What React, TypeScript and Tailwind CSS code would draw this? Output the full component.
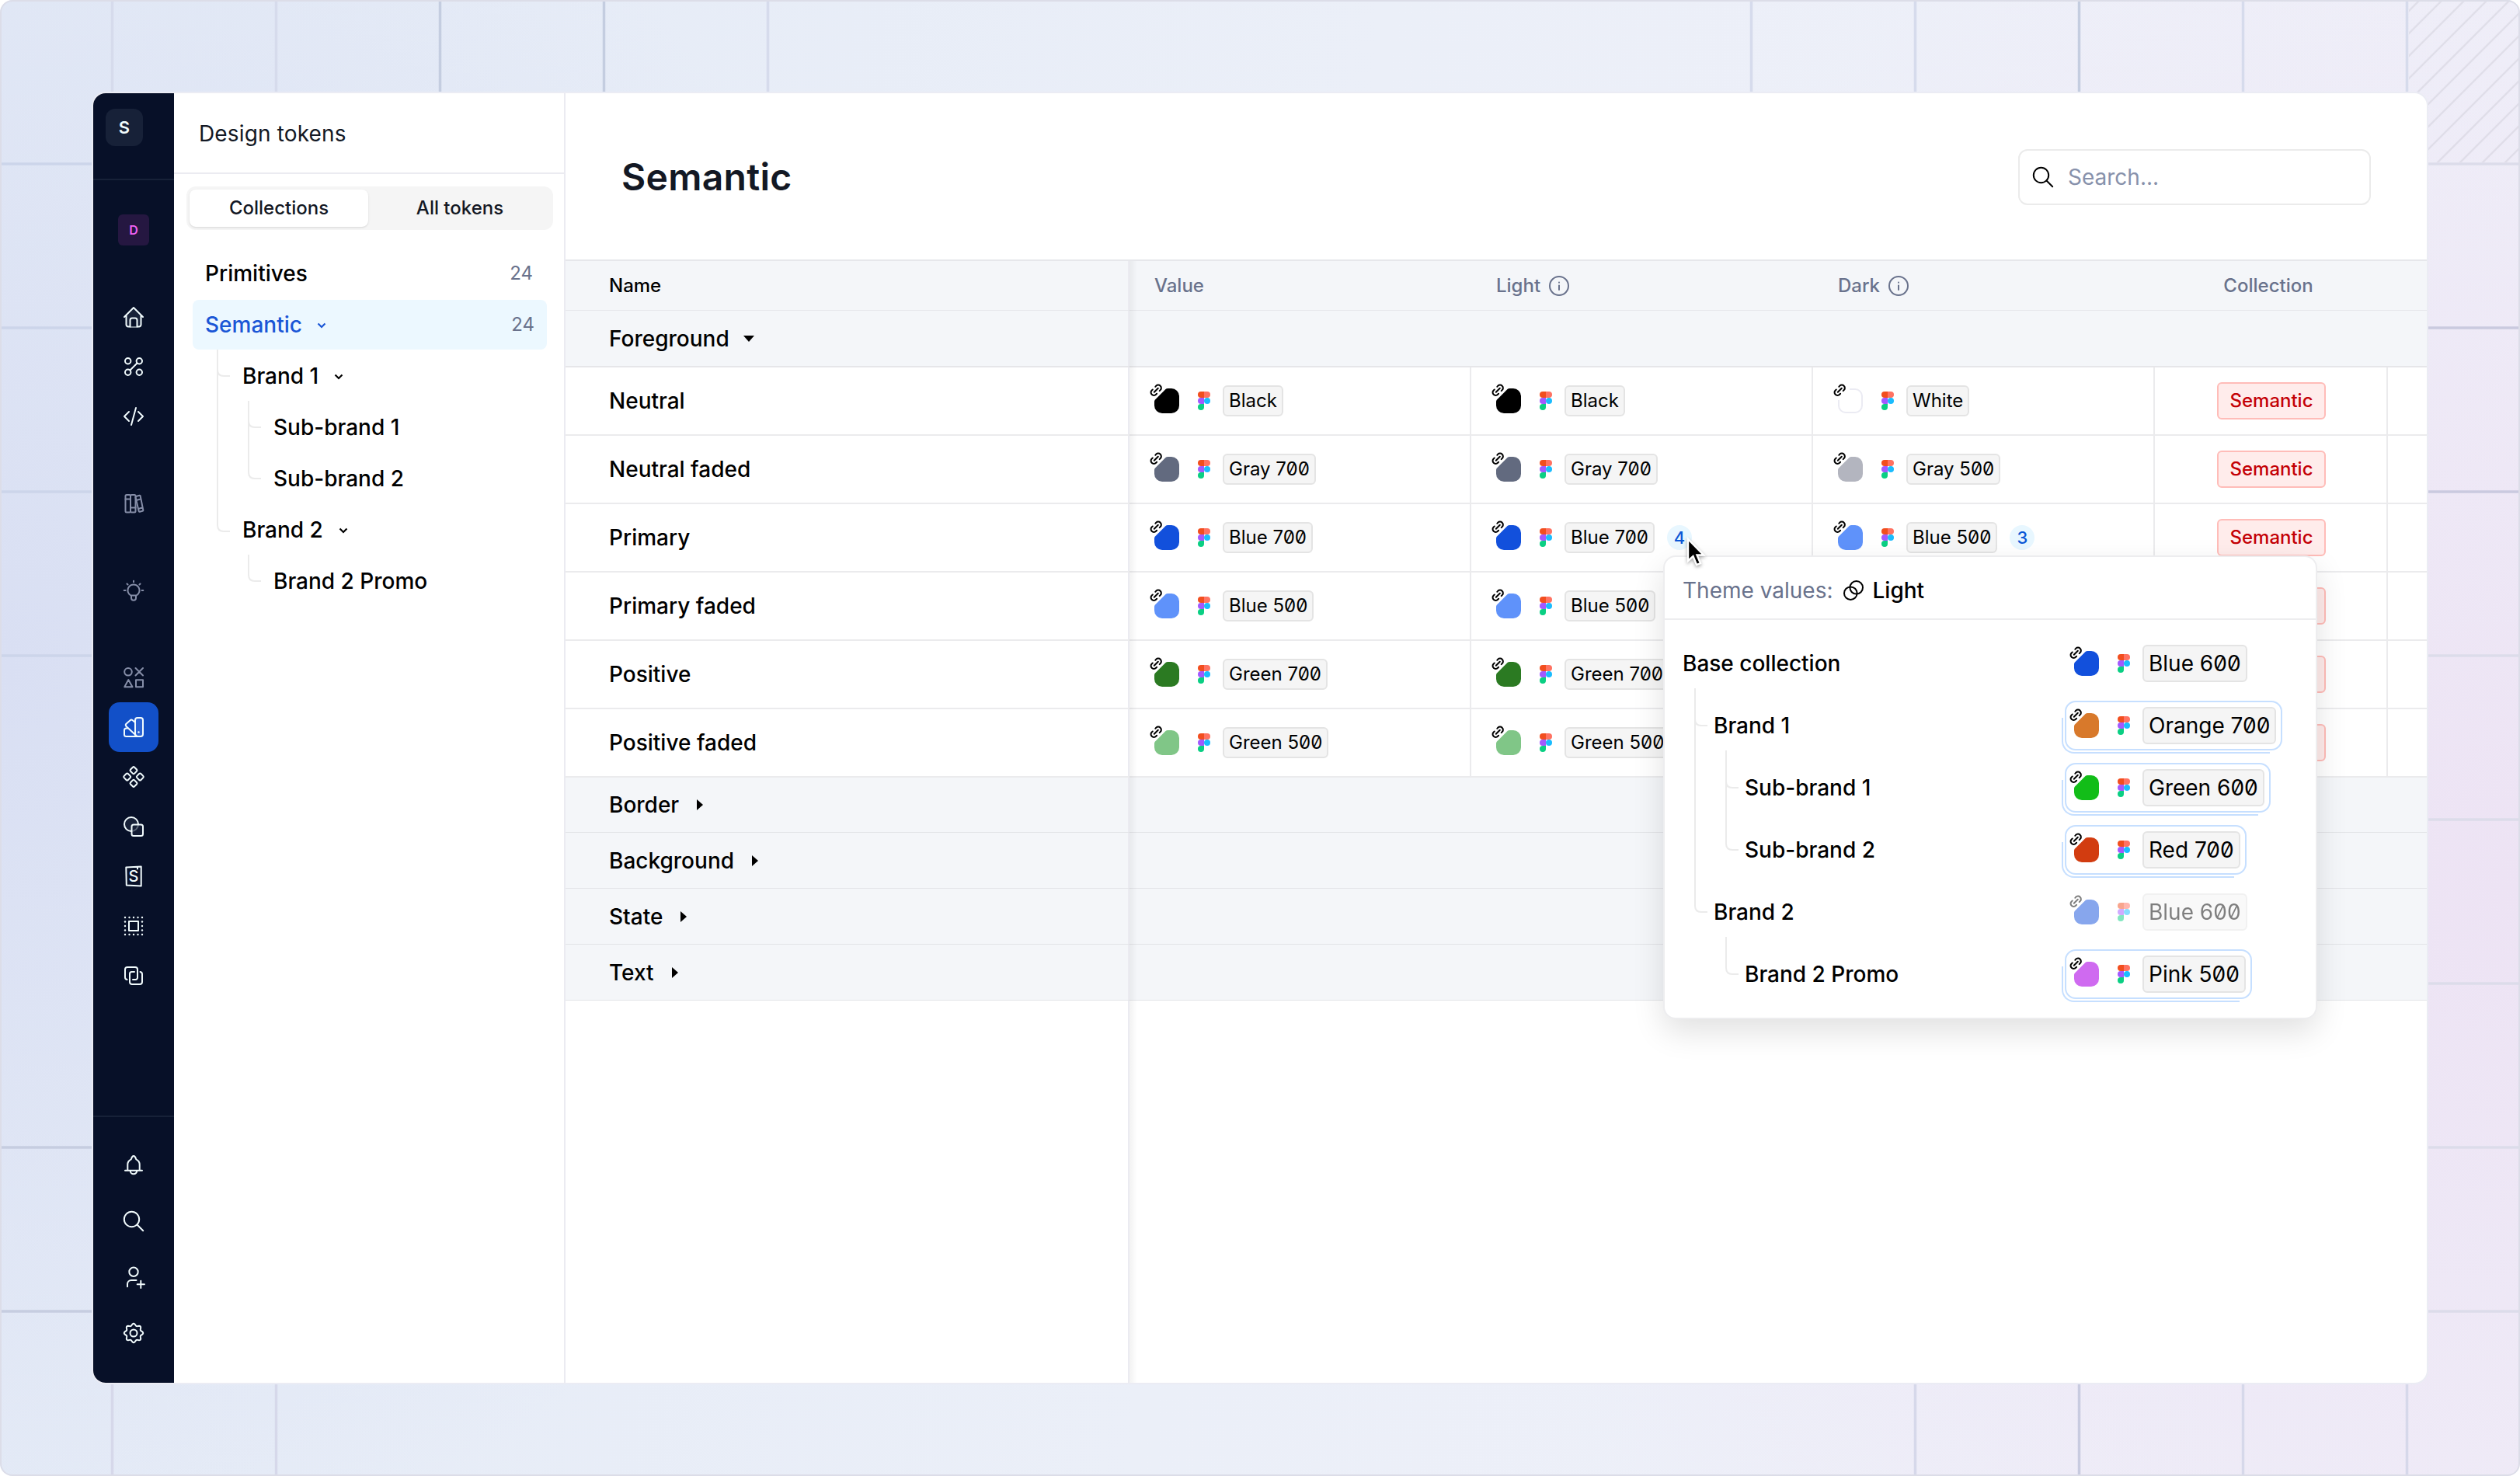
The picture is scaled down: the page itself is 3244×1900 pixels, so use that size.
import type { ReactNode } from 'react'
import clsx from 'clsx'

type Item = { name: string; color: string; count?: number }

const rows: { name: string; value: Item; light: Item; dark?: Item }[] = [
  {
    name: 'Neutral',
    value: { name: 'Black', color: '#000000' },
    light: { name: 'Black', color: '#000000' },
    dark: { name: 'White', color: '#ffffff' },
  },
  {
    name: 'Neutral faded',
    value: { name: 'Gray 700', color: '#626a7f' },
    light: { name: 'Gray 700', color: '#626a7f' },
    dark: { name: 'Gray 500', color: '#b3b5bf' },
  },
  {
    name: 'Primary',
    value: { name: 'Blue 700', color: '#1250dc' },
    light: { name: 'Blue 700', color: '#1250dc', count: 4 },
    dark: { name: 'Blue 500', color: '#5f92fa', count: 3 },
  },
  {
    name: 'Primary faded',
    value: { name: 'Blue 500', color: '#5f92fa' },
    light: { name: 'Blue 500', color: '#5f92fa' },
  },
  {
    name: 'Positive',
    value: { name: 'Green 700', color: '#2b7a22' },
    light: { name: 'Green 700', color: '#2b7a22' },
  },
  {
    name: 'Positive faded',
    value: { name: 'Green 500', color: '#80c687' },
    light: { name: 'Green 500', color: '#80c687' },
  },
]

const groups = ['Border', 'Background', 'State', 'Text']

const themeValues = [
  { label: 'Base collection', indent: 'pl-[23px]', name: 'Blue 600', color: '#1250dc', kind: 'base' },
  { label: 'Brand 1', indent: 'pl-[63px]', name: 'Orange 700', color: '#d8792b', kind: 'override' },
  { label: 'Sub-brand 1', indent: 'pl-[103px]', name: 'Green 600', color: '#12bd18', kind: 'override' },
  { label: 'Sub-brand 2', indent: 'pl-[103px]', name: 'Red 700', color: '#d23c10', kind: 'override' },
  { label: 'Brand 2', indent: 'pl-[63px]', name: 'Blue 600', color: '#1250dc', kind: 'inherited' },
  { label: 'Brand 2 Promo', indent: 'pl-[103px]', name: 'Pink 500', color: '#cf6af0', kind: 'override' },
]

// eight-lobed outline of the settings cog
const gearPath =
  Array.from({ length: 97 }, (_, i) => {
    const a = (i / 96) * Math.PI * 2
    const r = 10.9 + 1.3 * Math.cos(8 * a)
    return `${i ? 'L' : 'M'}${(16 + r * Math.cos(a)).toFixed(2)} ${(16 + r * Math.sin(a)).toFixed(2)}`
  }).join('') + 'Z'

const dots = [5, 10.5, 16, 21.5, 27]

function Icon({ children, className }: { children: ReactNode; className?: string }) {
  return (
    <svg
      viewBox="0 0 32 32"
      fill="none"
      stroke="currentColor"
      strokeWidth="2"
      strokeLinecap="round"
      strokeLinejoin="round"
      className={clsx('size-8 shrink-0', className)}
    >
      {children}
    </svg>
  )
}

function NavItem({ children, className }: { children: ReactNode; className?: string }) {
  return (
    <div className={clsx('flex size-16 shrink-0 items-center justify-center rounded-[14px]', className)}>
      <Icon>{children}</Icon>
    </div>
  )
}

function Rail() {
  return (
    <nav className="flex w-[104px] shrink-0 flex-col bg-[#071028] text-[#f1fbfd]">
      <div className="h-28 border-b-2 border-[#172138] pt-5 pl-4">
        <div className="flex size-12 items-center justify-center rounded-xl bg-[#172138] text-[22px] font-semibold">
          S
        </div>
      </div>
      <div className="flex flex-col items-center pt-11">
        <div className="flex size-10 items-center justify-center rounded-md bg-[#251741] text-base font-semibold text-[#f263f5]">
          D
        </div>
        <NavItem className="mt-[60px]">
          <path d="M6.5 13.5V26a2.5 2.5 0 0 0 2.500 2.500h14a2.500 2.500 0 0 0 2.500-2.500V13.500L16 4Z" fill="#172138" stroke="none" />
          <path d="M4 16 16 4l12 12M6.500 14v12a2.500 2.500 0 0 0 2.500 2.500h14a2.500 2.500 0 0 0 2.500-2.500V14" />
          <path d="M11.500 28.500V20a2.500 2.500 0 0 1 2.500-2.500h4a2.500 2.500 0 0 1 2.500 2.500v8.500" fill="#071028" />
        </NavItem>
        <NavItem>
          <circle cx="8.700" cy="8.700" r="3.700" />
          <circle cx="23.300" cy="8.700" r="3.700" />
          <circle cx="8.700" cy="23.300" r="3.700" />
          <circle cx="23.300" cy="23.300" r="3.700" />
          <path d="m11.500 20.500 9-9" />
        </NavItem>
        <NavItem>
          <path d="m10 10-6 6 6 6M22 10l6 6-6 6M19 5l-6 22" />
        </NavItem>
        <NavItem className="mt-12 text-[#868ea8]">
          <rect x="5.500" y="5" width="6.500" height="22.500" rx="1.500" />
          <rect x="12" y="5" width="6.500" height="22.500" rx="1.500" />
          <path d="M5.500 10.500H12M12 21.500h6.500" />
          <path d="m19 7 4.500-1.200a1 1 0 0 1 1.200.8l3.600 18a1 1 0 0 1-.8 1.200l-3.600.9a1 1 0 0 1-1.200-.8L18.500 8M19.500 12l5.600-1.600M22 23l5.500-1.600" />
        </NavItem>
        <NavItem className="mt-12 text-[#868ea8]">
          <path d="M13 22.500v3.300a3 3 0 0 0 6 0v-3.300M12.500 22.600a7.500 7.500 0 1 1 7 0zM16 3.700v1.600M3.700 16h1.800M26.500 16h1.800M7.500 7.500l1 1M24.500 7.500l-1 1" />
        </NavItem>
        <NavItem className="mt-12 text-[#868ea8]">
          <circle cx="9" cy="8.800" r="4.800" />
          <path d="m18.500 4 9.500 9.500M28 4l-9.500 9.500M9.300 19l-5 9.300h10.200zM19 19.200h9v9h-9z" />
        </NavItem>
        <NavItem className="bg-[#1250c8]">
          <rect x="18" y="4" width="10" height="24" rx="3" fill="#2a63d4" />
          <path d="m18 10-3.200-2.700a2.500 2.500 0 0 0-3.500.2L6.500 11.800c-1 1-1 2 0 3.200L20 27.500" />
          <path d="M8 17.500H6.500A2.500 2.500 0 0 0 4 20v5.500A2.500 2.500 0 0 0 6.500 28H23" />
          <circle cx="22.500" cy="22.500" r="1.200" fill="currentColor" stroke="none" />
        </NavItem>
        <NavItem>
          <rect x="12.400" y="4.100" width="7.200" height="7.200" rx="1.600" transform="rotate(45 16 7.700)" />
          <rect x="4.100" y="12.400" width="7.200" height="7.200" rx="1.600" transform="rotate(45 7.700 16)" />
          <rect x="20.700" y="12.400" width="7.200" height="7.200" rx="1.600" transform="rotate(45 24.300 16)" />
          <rect x="12.400" y="20.700" width="7.200" height="7.200" rx="1.600" transform="rotate(45 16 24.300)" />
        </NavItem>
        <NavItem>
          <circle cx="13" cy="13" r="9" fill="#172138" />
          <rect x="13.500" y="13.500" width="14.500" height="14.500" rx="2.500" fill="#172138" fillOpacity="0.700" />
        </NavItem>
        <NavItem>
          <path d="m6.300 4.500 19.400-1v25L6.800 27.600zM21 4.500v2" />
          <text
            x="16"
            y="23"
            textAnchor="middle"
            fontSize="20"
            fontWeight="500"
            fill="currentColor"
            stroke="none"
          >
            S
          </text>
        </NavItem>
        <NavItem>
          <rect x="10" y="10" width="12" height="12" />
          {dots.map((x) =>
            dots
              .filter((y) => x === 5 || x === 27 || y === 5 || y === 27)
              .map((y) => (
                <circle key={`${x}-${y}`} cx={x} cy={y} r="1.200" fill="currentColor" stroke="none" />
              )),
          )}
        </NavItem>
        <NavItem>
          <path d="M7.500 21A3 3 0 0 1 5 18V8a3 3 0 0 1 3-3h10a3 3 0 0 1 3 3v10.500a2.500 2.500 0 0 1-2.500 2.500H15" />
          <path d="M24.500 11a3 3 0 0 1 2.500 3v10a3 3 0 0 1-3 3H14a3 3 0 0 1-3-3V13.500a2.500 2.500 0 0 1 2.500-2.500H17" />
        </NavItem>
      </div>
      <div className="mt-auto flex h-[344px] flex-col items-center gap-2 border-t-2 border-[#172138] pt-[30px]">
        <NavItem>
          <path d="M8.300 22.500V15c0-3.500 2-5.500 4.500-6.700.8-2.800 1.500-4.300 3.200-4.300s2.400 1.500 3.200 4.300c2.500 1.200 4.500 3.200 4.500 6.700v7.500M5 22.700h22M11.700 23a4.300 4.300 0 0 0 8.600 0" />
        </NavItem>
        <NavItem>
          <circle cx="13.500" cy="13.500" r="9.700" />
          <path d="m20.500 20.500 7.700 7.700" />
        </NavItem>
        <NavItem>
          <circle cx="16" cy="9.300" r="5.700" />
          <path d="M8 28.300V25a5 5 0 0 1 5-5h6.500M25.300 20.700v9.200M20.700 25.300h9.200" />
        </NavItem>
        <NavItem>
          <path d={gearPath} />
          <circle cx="16" cy="16" r="4.500" />
        </NavItem>
      </div>
    </nav>
  )
}

function Chevron() {
  return (
    <svg viewBox="0 0 12 8" className="mt-0.5 h-2 w-3" fill="none" stroke="currentColor" strokeWidth="2.200">
      <path d="m1.500 1.500 4.500 4.500 4.500-4.500" />
    </svg>
  )
}

function TreeItem({ children, indent, open }: { children: string; indent: string; open?: boolean }) {
  return (
    <li className={clsx('flex h-16 items-center gap-5', indent)}>
      {children}
      {open && <Chevron />}
    </li>
  )
}

function Sidebar() {
  return (
    <aside className="flex w-[504px] shrink-0 flex-col border-r-2 border-[#ebebf1]">
      <div className="flex h-[104px] items-center border-b-2 border-[#ebebf1] pt-0.5 pl-8 text-[28px] tracking-[0.15px] text-[#131824]">
        Design tokens
      </div>
      <div className="mt-4 mr-3.5 ml-4 flex h-14 rounded-xl bg-[#f5f5f5] p-1 text-2xl font-medium text-[#131824]">
        <div className="flex w-[230px] items-center justify-center rounded-lg bg-white shadow-sm">Collections</div>
        <div className="flex flex-1 items-center justify-center pl-0.5">All tokens</div>
      </div>
      <ul className="relative mt-6 flex flex-col gap-0.5 pr-[22px] pl-6 text-[28px] font-medium text-black">
        <li className="flex h-16 items-center justify-between pr-[18px] pl-4">
          Primitives
          <span className="text-2xl font-normal text-[#69728c]">24</span>
        </li>
        <li className="flex h-16 items-center rounded-lg bg-[#ecf8ff] pr-4 pl-4 text-[#1a56d6]">
          Semantic
          <span className="ml-[19px]">
            <Chevron />
          </span>
          <span className="ml-auto text-2xl font-normal text-[#69728c]">24</span>
        </li>
        <TreeItem indent="pl-16" open>Brand 1</TreeItem>
        <TreeItem indent="pl-[104px]">Sub-brand 1</TreeItem>
        <TreeItem indent="pl-[104px]">Sub-brand 2</TreeItem>
        <TreeItem indent="pl-16" open>Brand 2</TreeItem>
        <TreeItem indent="pl-[104px]">Brand 2 Promo</TreeItem>
        <svg
          className="pointer-events-none absolute top-[130px] left-[54px] h-[300px] w-[62px]"
          fill="none"
          stroke="#ebebeb"
          strokeWidth="2"
        >
          <path d="M2 0v226q0 8 8 8h8M2 26q0 8 8 8h8M42 66v92q0 8 8 8h8M42 92q0 8 8 8h8M42 264v26q0 8 8 8h8" />
        </svg>
      </ul>
    </aside>
  )
}

function Swatch({ color }: { color: string }) {
  return (
    <svg viewBox="-6 -6 38 38" className="-mt-1.5 -ml-1.5 size-[38px] shrink-0">
      <path
        d="M17.500 0H22a10 10 0 0 1 10 10v12a10 10 0 0 1-10 10H10A10 10 0 0 1 0 22v-5q0-1.500 1-2.500L14.500 1q1-1 3-1Z"
        fill={color}
      />
      {color === '#ffffff' && (
        <path d="M15 1h7a9 9 0 0 1 9 9v12a9 9 0 0 1-9 9H10a9 9 0 0 1-9-9v-7" fill="none" stroke="#ebebf3" strokeWidth="2" />
      )}
      <g fill="none" stroke="#000" strokeWidth="2" strokeLinecap="round" transform="translate(-5.700 -5.700)">
        <path d="m5.500 10.500 5-5M7 3.500l1-1.100a3.700 3.700 0 0 1 5.400 0 3.700 3.700 0 0 1 0 5.400l-1 1M3.500 7.200l-1.100.9a3.700 3.700 0 0 0 0 5.400 3.700 3.700 0 0 0 5.400 0l1-1" />
      </g>
    </svg>
  )
}

function FigmaLogo() {
  return (
    <svg viewBox="0 0 16 24" className="h-6 w-4 shrink-0">
      <path d="M8 0H4a4 4 0 0 0 0 8h4z" fill="#f24e1e" />
      <path d="M8 0h4a4 4 0 0 1 0 8H8z" fill="#ff7262" />
      <path d="M8 8H4a4 4 0 0 0 0 8h4z" fill="#a259ff" />
      <circle cx="12" cy="12" r="4" fill="#1abcfe" />
      <path d="M4 16h4v4a4 4 0 1 1-4-4Z" fill="#0acf83" />
    </svg>
  )
}

function Token({ name, color, large }: { name: string; color: string; large?: boolean }) {
  return (
    <div className="flex items-center">
      <Swatch color={color} />
      <div className="ml-6">
        <FigmaLogo />
      </div>
      <div
        className={clsx(
          'ml-4 flex items-center rounded-md border-2 border-[#e4e4e4] bg-[#f5f5f5] px-1.5 whitespace-nowrap text-black slashed-zero',
          large ? 'h-12 text-[28px]' : 'h-10 text-2xl',
        )}
      >
        {name}
      </div>
    </div>
  )
}

function ValueCell({ item }: { item?: Item }) {
  return (
    <div className="flex w-[440px] shrink-0 items-center gap-4 border-r-2 border-[#ebebed] pl-8">
      {item && <Token name={item.name} color={item.color} />}
      {item?.count && (
        <span className="flex size-8 items-center justify-center rounded-full bg-[#e8f7ff] text-[22px] font-medium text-[#0b57d6]">
          {item.count}
        </span>
      )}
    </div>
  )
}

function NameCell({ children, className }: { children: ReactNode; className?: string }) {
  return (
    <div className={clsx('flex w-[726px] shrink-0 items-center gap-5 border-r-2 border-[#ebebf1] pl-14 font-medium', className)}>
      {children}
    </div>
  )
}

function InfoIcon() {
  return (
    <Icon className="-ml-0.5">
      <circle cx="16" cy="16" r="12" />
      <path d="M16 15.500V21M16 11.500v.2" />
    </Icon>
  )
}

function TokenTable() {
  return (
    <div className="relative text-[28px] text-black">
      <div className="flex h-[66px] border-y border-t-2 border-[#e6e7eb] bg-[#f4f6f9] text-2xl font-medium text-[#69728c]">
        <NameCell className="text-black">Name</NameCell>
        <div className="flex w-[440px] items-center pl-8">Value</div>
        <div className="flex w-[440px] items-center gap-2.5 pl-8">
          Light <InfoIcon />
        </div>
        <div className="flex w-[440px] items-center gap-2.5 pl-8">
          Dark <InfoIcon />
        </div>
        <div className="flex w-[292px] items-center justify-center">Collection</div>
      </div>
      <div className="flex h-[73px] border-b-2 border-[#e6e6e9] bg-[#f4f6f9]">
        <NameCell>
          Foreground
          <svg viewBox="0 0 14 8" className="-ml-0.5 h-2 w-3.5">
            <path d="M0 0h14L7 8z" />
          </svg>
        </NameCell>
      </div>
      {rows.map((row) => (
        <div key={row.name} className="flex h-[88px] border-b-2 border-[#ebebed]">
          <NameCell>{row.name}</NameCell>
          <ValueCell item={row.value} />
          <ValueCell item={row.light} />
          <ValueCell item={row.dark} />
          <div className="flex w-[300px] items-center justify-center border-r-2 border-[#ebebed]">
            <span className="ml-0.5 flex h-12 w-[140px] items-center justify-center rounded-md border-2 border-[#ffbcb8] bg-[#ffeceb] text-2xl font-medium text-[#c40006]">
              Semantic
            </span>
          </div>
        </div>
      ))}
      {groups.map((group, i) => (
        <div
          key={group}
          className={clsx('flex border-b border-[#e3e4e8] bg-[#f4f6f9]', i === 0 ? 'h-[71px]' : 'h-[72px]')}
        >
          <NameCell>
            {group}
            <svg viewBox="0 0 8 14" className="ml-[3px] h-3.5 w-2">
              <path d="M0 0v14l8-7z" />
            </svg>
          </NameCell>
        </div>
      ))}
    </div>
  )
}

function ThemePopover() {
  return (
    <div className="absolute top-[595px] left-[1413px] w-[842px] rounded-2xl border-2 border-[#ededef] bg-white text-[28px] text-black shadow-[0_16px_40px_rgba(0,0,0,0.12)]">
      <div className="flex h-[81px] items-center border-b-2 border-[#ededef] pt-[7px] pl-[23px] font-medium">
        <span className="font-normal text-[#69728c]">Theme values:</span>
        <Icon className="ml-2.5">
          <circle cx="12.300" cy="19.700" r="8.300" />
          <circle cx="19.700" cy="12.300" r="8.300" />
        </Icon>
        <span className="ml-[9px]">Light</span>
      </div>
      <div className="relative flex flex-col py-4">
        {themeValues.map((v) => (
          <div key={v.label} className="flex h-20 items-center">
            <div className={clsx('w-[515px] shrink-0 font-medium', v.indent)}>{v.label}</div>
            <div
              className={clsx(
                'relative flex h-16 items-center border-2 pr-[6px] pl-[10px]',
                v.kind === 'override' ? 'rounded-[14px] border-[#c6dfff]' : 'border-transparent',
                v.kind === 'inherited' && 'opacity-50',
              )}
            >
              {v.kind === 'override' && (
                <span className="absolute -bottom-1.5 -left-1.5 h-[46px] w-[calc(100%-8px)] rounded-bl-2xl border-b-2 border-l-2 border-[#c6dfff]" />
              )}
              <Token name={v.name} color={v.color} large />
            </div>
          </div>
        ))}
        <svg
          className="pointer-events-none absolute top-[88px] left-[37px] h-[380px] w-[62px]"
          fill="none"
          stroke="#ebebeb"
          strokeWidth="2"
        >
          <path d="M2 0v280q0 8 8 8h8M2 40q0 8 8 8h8M42 80v120q0 8 8 8h8M42 120q0 8 8 8h8M42 320v40q0 8 8 8h8" />
        </svg>
      </div>
    </div>
  )
}

function Cursor() {
  return (
    <svg
      viewBox="0 0 28 42"
      className="absolute top-[572px] left-[1442px] h-[42px] w-7 overflow-visible drop-shadow-[0_2px_2px_rgba(0,0,0,0.35)]"
    >
      <path d="M3 2v28l6.500-6 4.500 11 5-2-4.500-10.500H23z" fill="#000" stroke="#fff" strokeWidth="2.400" />
    </svg>
  )
}

function Backdrop() {
  const lines = Array.from({ length: 15 }, (_, i) => 144.5 + i * 211)
  return (
    <svg className="absolute inset-0 size-full" fill="none">
      <defs>
        <pattern id="hatch" width="29" height="29" patternUnits="userSpaceOnUse" x="3100" y="15">
          <path d="M-2 31 31-2M-2 2 2-2M27 31l4-4" stroke="#9a9aa8" strokeOpacity="0.180" strokeWidth="2.500" />
        </pattern>
      </defs>
      {lines.map((x, i) => (
        <g key={x} strokeWidth="3.500">
          {(i < 5 || i > 9) && (
            <path d={`M${x} 0v120`} stroke={i === 2 || i === 3 || i === 12 ? '#c4cde0' : '#d6dbec'} />
          )}
          {(i < 2 || i > 10) && (
            <path d={`M${x} 1780v120`} stroke={i === 12 ? '#c8cbe0' : '#d6d8ea'} />
          )}
        </g>
      ))}
      {lines.slice(0, 8).map((x, i) => (
        <g key={x} strokeWidth="3.500">
          {i !== 4 && i !== 5 && (
            <path d={`M0 ${211 * (i + 1)}h120`} stroke={i > 5 ? '#c6cde0' : '#ccd5ea'} />
          )}
          <path d={`M3124 ${211 * (i + 1)}h120`} stroke={i === 1 || i === 2 ? '#cacadf' : '#dcdcea'} />
        </g>
      ))}
      <path d="M3101 0h143v209h-143z" fill="url(#hatch)" />
    </svg>
  )
}

export default function App() {
  return (
    <div className="h-[1900px] w-[3244px] overflow-hidden bg-white font-['Inter','Liberation_Sans',sans-serif]">
      <div className="relative flex h-full overflow-hidden rounded-2xl bg-[radial-gradient(circle_at_0%_45%,#d9dff3_0%,transparent_35%),radial-gradient(circle_at_100%_60%,#ede3f4_0%,transparent_40%),linear-gradient(100deg,#e3eaf6_0%,#ebeff8_50%,#f0f0f9_100%)] px-[120px] py-[120px]">
        <Backdrop />
        <div className="relative flex flex-1 overflow-hidden rounded-2xl bg-white shadow-[0_0_0_2px_#ebecf4]">
          <Rail />
          <Sidebar />
          <main className="relative flex min-w-0 flex-1 flex-col overflow-hidden">
            <header className="flex h-[214px] shrink-0 items-center justify-between px-[72px] pt-0.5">
              <h1 className="text-5xl font-semibold tracking-[0.3px] text-[#131824]">Semantic</h1>
              <div className="flex h-[72px] w-[454px] items-center rounded-xl border-2 border-[#ebebeb] pl-3.5 text-[28px] text-[#8791ab]">
                <Icon className="text-black">
                  <circle cx="13.500" cy="13.500" r="9.700" />
                  <path d="m20.500 20.500 7.700 7.700" />
                </Icon>
                <span className="ml-4">Search...</span>
              </div>
            </header>
            <TokenTable />
            <div className="w-[726px] flex-1 border-r-2 border-[#ebebf1]" />
            {/* shadow of the pinned name column */}
            <div className="absolute top-[216px] bottom-0 left-[726px] w-2.5 bg-gradient-to-r from-black/5 to-transparent" />
            <ThemePopover />
            <Cursor />
          </main>
        </div>
        <div className="pointer-events-none absolute inset-0 rounded-2xl border-2 border-[#dcdde8]" />
      </div>
    </div>
  )
}
